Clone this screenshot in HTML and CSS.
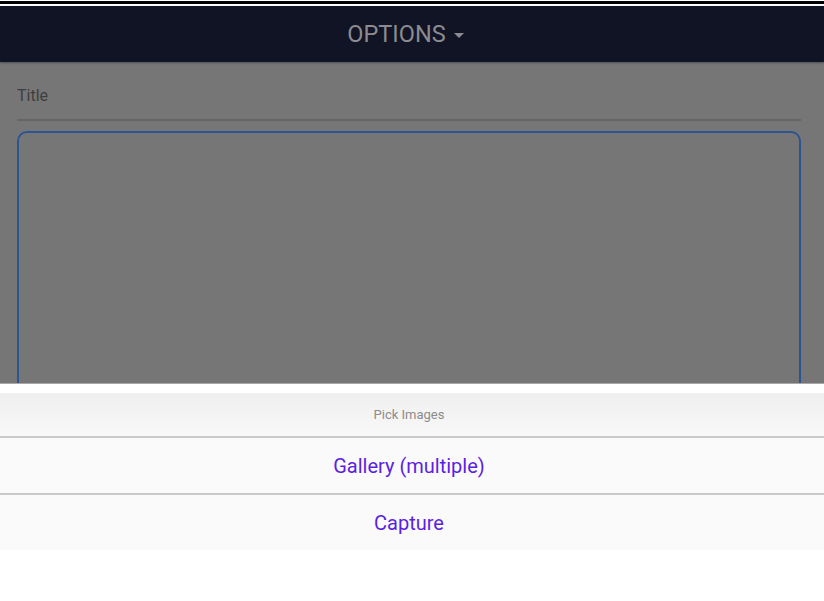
FILE: index.html
```html
<!DOCTYPE html>
<html>
<head>
	<meta charset="utf-8">
	<title>Options</title>
	<link rel="stylesheet" href="styles.css">
</head>
<body>
	<div class="top-strip"></div>
	<header class="app-bar">
		<span class="app-title">OPTIONS</span>
		<span class="caret"></span>
	</header>

	<div class="page">
		<div class="title-field">
			<span class="title-label">Title</span>
		</div>
		<div class="body-box"></div>
	</div>

	<div class="sheet-gap"></div>
	<div class="sheet">
		<div class="sheet-head">Pick Images</div>
		<div class="sheet-item">Gallery (multiple)</div>
		<div class="sheet-item">Capture</div>
	</div>
</body>
</html>
```

FILE: styles.css
```css
html, body {
	margin: 0;
	padding: 0;
	background: #fff;
	font-family: Roboto, "Liberation Sans", sans-serif;
	overflow: hidden;
}
.top-strip {
	height: 3px;
	border-top: 1px solid #fff;
	border-bottom: 2px solid #fff;
	background: #000;
}
.app-bar {
	height: 56px;
	background: #111424;
	display: flex;
	align-items: center;
	justify-content: center;
	gap: 8px;
	padding-right: 13px;
	box-shadow: 0 1px 2px rgba(0,0,0,0.35);
	position: relative;
}
.app-title {
	color: #8b8b90;
	font-size: 23.5px;
}
.caret {
	width: 0;
	height: 0;
	border-left: 5px solid transparent;
	border-right: 5px solid transparent;
	border-top: 5px solid #8b8b90;
	margin-top: 2px;
}
.page {
	height: 321px;
	background: #767676;
	padding: 0 23px 0 17px;
	overflow: hidden;
	border-bottom: 1px solid #a9a9a9;
}
.title-field {
	height: 57px;
	border-bottom: 2px solid #656565;
	display: flex;
	align-items: center;
}
.title-label {
	color: #3e3e3e;
	font-size: 16px;
	margin-top: 10px;
}
.body-box {
	margin-top: 10px;
	height: 300px;
	border: 2px solid #2b5592;
	border-radius: 10px;
}
.sheet-gap {
	height: 9px;
}
.sheet {
	background: #fafafa;
}
.sheet-head {
	height: 42px;
	line-height: 42px;
	padding: 1px 6px 0 0;
	text-align: center;
	font-size: 13px;
	color: #8c8c8c;
	background: linear-gradient(#efefef, #f8f8f8);
	border-bottom: 2px solid #c9c9c9;
}
.sheet-item {
	height: 54px;
	line-height: 54px;
	padding: 1px 6px 0 0;
	text-align: center;
	font-size: 20px;
	color: #5b1fe4;
}
.sheet-item + .sheet-item {
	border-top: 2px solid #c9c9c9;
}
```
